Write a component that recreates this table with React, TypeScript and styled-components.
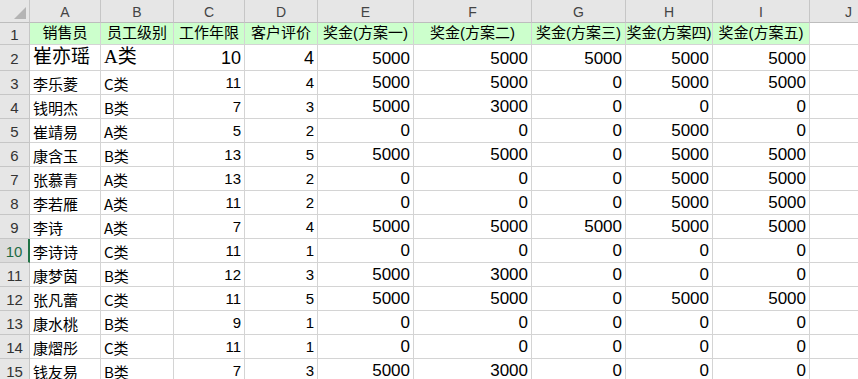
import * as React from 'react';
import styled, { createGlobalStyle, css } from 'styled-components';

const GlobalStyle = createGlobalStyle`
  html, body {
    margin: 0;
    padding: 0;
    background: #ffffff;
    overflow: hidden;
  }
`;

const COLS = '30px 71px 73px 71px 73px 96px 118px 94px 87px 97px 78px';
const LETTERS = ['A', 'B', 'C', 'D', 'E', 'F', 'G', 'H', 'I', 'J'];
const HEADERS = ['销售员', '员工级别', '工作年限', '客户评价', '奖金(方案一)', '奖金(方案二)', '奖金(方案三)', '奖金(方案四)', '奖金(方案五)'];

type RowData = [string, string, number, number, number, number, number, number, number];

const rows: RowData[] = [
  ['崔亦瑶', 'A类', 10, 4, 5000, 5000, 5000, 5000, 5000],
  ['李乐菱', 'C类', 11, 4, 5000, 5000, 0, 5000, 5000],
  ['钱明杰', 'B类', 7, 3, 5000, 3000, 0, 0, 0],
  ['崔靖易', 'A类', 5, 2, 0, 0, 0, 5000, 0],
  ['康含玉', 'B类', 13, 5, 5000, 5000, 0, 5000, 5000],
  ['张慕青', 'A类', 13, 2, 0, 0, 0, 5000, 5000],
  ['李若雁', 'A类', 11, 2, 0, 0, 0, 5000, 5000],
  ['李诗', 'A类', 7, 4, 5000, 5000, 5000, 5000, 5000],
  ['李诗诗', 'C类', 11, 1, 0, 0, 0, 0, 0],
  ['康梦茵', 'B类', 12, 3, 5000, 3000, 0, 0, 0],
  ['张凡蕾', 'C类', 11, 5, 5000, 5000, 0, 5000, 5000],
  ['康水桃', 'B类', 9, 1, 0, 0, 0, 0, 0],
  ['康熠彤', 'C类', 11, 1, 0, 0, 0, 0, 0],
  ['钱友易', 'B类', 7, 3, 5000, 3000, 0, 0, 0],
];

const Sheet = styled.div`
  width: 858px;
  height: 379px;
  overflow: hidden;
  display: flex;
  flex-direction: column;
  font-family: 'Liberation Sans', 'Noto Sans CJK SC', sans-serif;
  color: #000;
`;

const Row = styled.div<{ $h: number }>`
  display: grid;
  grid-template-columns: ${COLS};
  height: ${({ $h }) => $h}px;
  flex-shrink: 0;
`;

const Corner = styled.div`
  background: #e6e6e6;
  border-right: 1px solid #c6c6c6;
  border-bottom: 1px solid #bdbdbd;
  box-sizing: border-box;
  display: flex;
  align-items: flex-end;
  justify-content: flex-end;
  padding: 0 3px 3px 0;
`;

const ColHead = styled.div`
  background: #e6e6e6;
  border-right: 1px solid #c6c6c6;
  border-bottom: 1px solid #bdbdbd;
  box-sizing: border-box;
  display: flex;
  align-items: center;
  justify-content: center;
  font-size: 14px;
  color: #444;
  padding-top: 1px;
`;

const RowHead = styled.div<{ $active?: boolean }>`
  background: ${({ $active }) => ($active ? '#dcdcdc' : '#e6e6e6')};
  border-bottom: 1px solid #c6c6c6;
  border-right: ${({ $active }) => ($active ? '2px solid #217346' : '1px solid #c6c6c6')};
  box-sizing: border-box;
  display: flex;
  align-items: center;
  justify-content: center;
  font-size: 15px;
  color: ${({ $active }) => ($active ? '#1e6b45' : '#333')};
  padding-top: 1px;
`;

const Cell = styled.div<{
  $align?: 'left' | 'right' | 'center';
  $green?: boolean;
  $size?: number;
  $serif?: boolean;
  $text?: boolean;
}>`
  border-right: 1px solid #d4d4d4;
  border-bottom: 1px solid #d4d4d4;
  box-sizing: border-box;
  background: ${({ $green }) => ($green ? '#ccffcc' : '#ffffff')};
  display: flex;
  align-items: flex-end;
  justify-content: ${({ $align }) =>
    $align === 'right' ? 'flex-end' : $align === 'center' ? 'center' : 'flex-start'};
  padding: 0 3px 1px 3px;
  font-size: ${({ $size }) => $size ?? 15}px;
  line-height: 1.25;
  white-space: nowrap;
  overflow: hidden;
  ${({ $text }) =>
    $text &&
    css`
      font-family: 'Noto Sans CJK SC', 'Liberation Sans', sans-serif;
      line-height: 1.2;
    `}
  ${({ $serif }) =>
    $serif &&
    css`
      font-family: 'Liberation Serif', 'Noto Sans CJK SC', serif;
      font-weight: 400;
      line-height: 1.2;
    `}
`;

function CornerMark() {
  return (
    <svg width="12" height="12" viewBox="0 0 12 12">
      <polygon points="12,0 12,12 0,12" fill="#b4b4b4" />
    </svg>
  );
}

function App() {
  return (
    <>
      <GlobalStyle />
      <Sheet>
        <Row $h={23}>
          <Corner>
            <CornerMark />
          </Corner>
          {LETTERS.map((l) => (
            <ColHead key={l}>{l}</ColHead>
          ))}
        </Row>
        <Row $h={22}>
          <RowHead>1</RowHead>
          {HEADERS.map((h) => (
            <Cell key={h} $align="center" $green $size={15}>
              {h}
            </Cell>
          ))}
          <Cell />
        </Row>
        {rows.map((r, i) => {
          const num = i + 2;
          const big = num === 2;
          return (
            <Row key={num} $h={big ? 26 : 24}>
              <RowHead $active={num === 10}>{num}</RowHead>
              <Cell $size={big ? 19 : 15} $serif={big} $text={!big}>
                {r[0]}
              </Cell>
              <Cell $size={big ? 19 : 15} $serif={big} $text={!big}>
                {r[1]}
              </Cell>
              <Cell $align="right" $size={big ? 18 : 15}>
                {r[2]}
              </Cell>
              <Cell $align="right" $size={big ? 18 : 15}>
                {r[3]}
              </Cell>
              {r.slice(4).map((v, j) => (
                <Cell key={j} $align="right" $size={17}>
                  {v}
                </Cell>
              ))}
              <Cell />
            </Row>
          );
        })}
      </Sheet>
    </>
  );
}

export default App;
